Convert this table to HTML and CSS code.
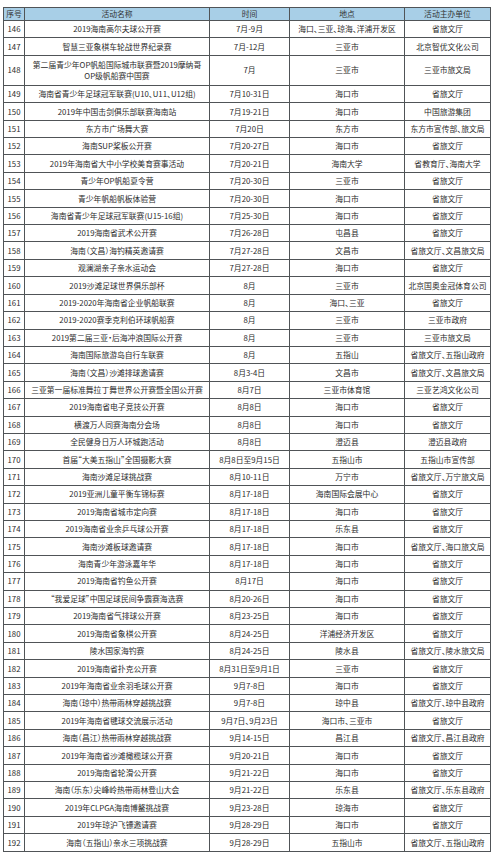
FILE: index.html
```html
<!DOCTYPE html>
<html lang="zh-CN">
<head>
<meta charset="utf-8">
<title>活动表</title>
<link rel="stylesheet" href="styles.css">
</head>
<body>
<div class="sheet">
  <div class="row head"><div class="c">序号</div><div class="c">活动名称</div><div class="c">时间</div><div class="c">地点</div><div class="c">活动主办单位</div></div>
  <div class="row"><div class="c">146</div><div class="c">2019海南高尔夫球公开赛</div><div class="c">7月-9月</div><div class="c">海口、三亚、琼海、洋浦开发区</div><div class="c">省旅文厅</div></div>
  <div class="row"><div class="c">147</div><div class="c">智慧三亚象棋车轮战世界纪录赛</div><div class="c">7月-12月</div><div class="c">三亚市</div><div class="c">北京智优文化公司</div></div>
  <div class="row"><div class="c">148</div><div class="c two">第二届青少年OP帆船国际城市联赛暨2019摩纳哥<br>OP级帆船赛中国赛</div><div class="c">7月</div><div class="c">三亚市</div><div class="c">三亚市旅文局</div></div>
  <div class="row"><div class="c">149</div><div class="c">海南省青少年足球冠军联赛(U10、U11、U12组)</div><div class="c">7月10-31日</div><div class="c">海口市</div><div class="c">省旅文厅</div></div>
  <div class="row"><div class="c">150</div><div class="c">2019年中国击剑俱乐部联赛海南站</div><div class="c">7月19-21日</div><div class="c">海口市</div><div class="c">中国旅游集团</div></div>
  <div class="row"><div class="c">151</div><div class="c">东方市广场舞大赛</div><div class="c">7月20日</div><div class="c">东方市</div><div class="c">东方市宣传部、旅文局</div></div>
  <div class="row"><div class="c">152</div><div class="c">海南SUP桨板公开赛</div><div class="c">7月20-27日</div><div class="c">海口市</div><div class="c">省旅文厅</div></div>
  <div class="row"><div class="c">153</div><div class="c">2019年海南省大中小学校美育赛事活动</div><div class="c">7月20-21日</div><div class="c">海南大学</div><div class="c">省教育厅、海南大学</div></div>
  <div class="row"><div class="c">154</div><div class="c">青少年OP帆船夏令营</div><div class="c">7月20-30日</div><div class="c">三亚市</div><div class="c">省旅文厅</div></div>
  <div class="row"><div class="c">155</div><div class="c">青少年帆船帆板体验营</div><div class="c">7月20-30日</div><div class="c">海口市</div><div class="c">省旅文厅</div></div>
  <div class="row"><div class="c">156</div><div class="c">海南省青少年足球冠军联赛(U15-16组)</div><div class="c">7月25-30日</div><div class="c">海口市</div><div class="c">省旅文厅</div></div>
  <div class="row"><div class="c">157</div><div class="c">2019海南省武术公开赛</div><div class="c">7月26-28日</div><div class="c">屯昌县</div><div class="c">省旅文厅</div></div>
  <div class="row"><div class="c">158</div><div class="c">海南（文昌）海钓精英邀请赛</div><div class="c">7月27-28日</div><div class="c">文昌市</div><div class="c">省旅文厅、文昌旅文局</div></div>
  <div class="row"><div class="c">159</div><div class="c">观澜湖亲子亲水运动会</div><div class="c">7月27-28日</div><div class="c">海口市</div><div class="c">省旅文厅</div></div>
  <div class="row"><div class="c">160</div><div class="c">2019沙滩足球世界俱乐部杯</div><div class="c">8月</div><div class="c">三亚市</div><div class="c">北京国奥金冠体育公司</div></div>
  <div class="row"><div class="c">161</div><div class="c">2019-2020年海南省企业帆船联赛</div><div class="c">8月</div><div class="c">海口、三亚</div><div class="c">省旅文厅</div></div>
  <div class="row"><div class="c">162</div><div class="c">2019-2020赛季克利伯环球帆船赛</div><div class="c">8月</div><div class="c">三亚市</div><div class="c">三亚市政府</div></div>
  <div class="row"><div class="c">163</div><div class="c">2019第二届三亚·后海冲浪国际公开赛</div><div class="c">8月</div><div class="c">三亚市</div><div class="c">三亚市旅文局</div></div>
  <div class="row"><div class="c">164</div><div class="c">海南国际旅游岛自行车联赛</div><div class="c">8月</div><div class="c">五指山</div><div class="c">省旅文厅、五指山政府</div></div>
  <div class="row"><div class="c">165</div><div class="c">海南（文昌）沙滩排球邀请赛</div><div class="c">8月3-4日</div><div class="c">文昌市</div><div class="c">省旅文厅、文昌旅文局</div></div>
  <div class="row"><div class="c">166</div><div class="c">三亚第一届标准舞拉丁舞世界公开赛暨全国公开赛</div><div class="c">8月7日</div><div class="c">三亚市体育馆</div><div class="c">三亚艺鸿文化公司</div></div>
  <div class="row"><div class="c">167</div><div class="c">2019海南省电子竞技公开赛</div><div class="c">8月8日</div><div class="c">海口市</div><div class="c">省旅文厅</div></div>
  <div class="row"><div class="c">168</div><div class="c">横渡万人同赛海南分会场</div><div class="c">8月8日</div><div class="c">海口市</div><div class="c">省旅文厅</div></div>
  <div class="row"><div class="c">169</div><div class="c">全民健身日万人环城跑活动</div><div class="c">8月8日</div><div class="c">澄迈县</div><div class="c">澄迈县政府</div></div>
  <div class="row"><div class="c">170</div><div class="c">首届“大美五指山”全国摄影大赛</div><div class="c">8月8日至9月15日</div><div class="c">五指山市</div><div class="c">五指山市宣传部</div></div>
  <div class="row"><div class="c">171</div><div class="c">海南沙滩足球挑战赛</div><div class="c">8月10-11日</div><div class="c">万宁市</div><div class="c">省旅文厅、万宁旅文局</div></div>
  <div class="row"><div class="c">172</div><div class="c">2019亚洲儿童平衡车锦标赛</div><div class="c">8月17-18日</div><div class="c">海南国际会展中心</div><div class="c">省旅文厅</div></div>
  <div class="row"><div class="c">173</div><div class="c">2019海南省城市定向赛</div><div class="c">8月17-18日</div><div class="c">海口市</div><div class="c">省旅文厅</div></div>
  <div class="row"><div class="c">174</div><div class="c">2019海南省业余乒乓球公开赛</div><div class="c">8月17-18日</div><div class="c">乐东县</div><div class="c">省旅文厅</div></div>
  <div class="row"><div class="c">175</div><div class="c">海南沙滩板球邀请赛</div><div class="c">8月17-18日</div><div class="c">海口市</div><div class="c">省旅文厅、海口旅文局</div></div>
  <div class="row"><div class="c">176</div><div class="c">海南青少年游泳嘉年华</div><div class="c">8月17-18日</div><div class="c">海口市</div><div class="c">省旅文厅</div></div>
  <div class="row"><div class="c">177</div><div class="c">2019海南省钓鱼公开赛</div><div class="c">8月17日</div><div class="c">海口市</div><div class="c">省旅文厅</div></div>
  <div class="row"><div class="c">178</div><div class="c">“我爱足球”中国足球民间争霸赛海选赛</div><div class="c">8月20-26日</div><div class="c">海口市</div><div class="c">省旅文厅</div></div>
  <div class="row"><div class="c">179</div><div class="c">2019海南省气排球公开赛</div><div class="c">8月23-25日</div><div class="c">海口市</div><div class="c">省旅文厅</div></div>
  <div class="row"><div class="c">180</div><div class="c">2019海南省象棋公开赛</div><div class="c">8月24-25日</div><div class="c">洋浦经济开发区</div><div class="c">省旅文厅</div></div>
  <div class="row"><div class="c">181</div><div class="c">陵水国家海钓赛</div><div class="c">8月24-25日</div><div class="c">陵水县</div><div class="c">省旅文厅、陵水旅文局</div></div>
  <div class="row"><div class="c">182</div><div class="c">2019海南省扑克公开赛</div><div class="c">8月31日至9月1日</div><div class="c">三亚市</div><div class="c">省旅文厅</div></div>
  <div class="row"><div class="c">183</div><div class="c">2019年海南省业余羽毛球公开赛</div><div class="c">9月7-8日</div><div class="c">海口市</div><div class="c">省旅文厅</div></div>
  <div class="row"><div class="c">184</div><div class="c">海南（琼中）热带雨林穿越挑战赛</div><div class="c">9月7-8日</div><div class="c">琼中县</div><div class="c">省旅文厅、琼中县政府</div></div>
  <div class="row"><div class="c">185</div><div class="c">2019年海南省毽球交流展示活动</div><div class="c">9月7日、9月23日</div><div class="c">海口市、三亚市</div><div class="c">省旅文厅</div></div>
  <div class="row"><div class="c">186</div><div class="c">海南（昌江）热带雨林穿越挑战赛</div><div class="c">9月14-15日</div><div class="c">昌江县</div><div class="c">省旅文厅、昌江县政府</div></div>
  <div class="row"><div class="c">187</div><div class="c">2019年海南省沙滩橄榄球公开赛</div><div class="c">9月20-21日</div><div class="c">海口市</div><div class="c">省旅文厅</div></div>
  <div class="row"><div class="c">188</div><div class="c">2019海南省轮滑公开赛</div><div class="c">9月21-22日</div><div class="c">海口市</div><div class="c">省旅文厅</div></div>
  <div class="row"><div class="c">189</div><div class="c">海南（乐东）尖峰岭热带雨林登山大会</div><div class="c">9月21-22日</div><div class="c">乐东县</div><div class="c">省旅文厅、乐东县政府</div></div>
  <div class="row"><div class="c">190</div><div class="c">2019年CLPGA海南博鳌挑战赛</div><div class="c">9月23-28日</div><div class="c">琼海市</div><div class="c">省旅文厅</div></div>
  <div class="row"><div class="c">191</div><div class="c">2019年琼沪飞镖邀请赛</div><div class="c">9月28-29日</div><div class="c">海口市</div><div class="c">省旅文厅</div></div>
  <div class="row"><div class="c">192</div><div class="c">海南（五指山）亲水三项挑战赛</div><div class="c">9月28-29日</div><div class="c">五指山市</div><div class="c">省旅文厅、五指山政府</div></div>
</div>
</body>
</html>
```
FILE: styles.css
```css
html, body {
  margin: 0;
  padding: 0;
  background: #ffffff;
}

body {
  padding: 7px 0 0 3px;
  font-family: "Noto Sans CJK SC", "Noto Sans", sans-serif;
  font-size: 7.8px;
  color: #2b2b2b;
  font-feature-settings: "halt";
}

.sheet {
  display: grid;
  width: 488px;
  box-sizing: border-box;
  grid-template-columns: 20px 184px 79px 114px 85px;
  grid-template-rows: 12px 16.41px 16.41px 29px repeat(44, 16.41px);
  gap: 1px;
  padding: 1px;
  background: #505457;
}

.row {
  display: contents;
}

.c {
  background: #ffffff;
  display: flex;
  align-items: center;
  justify-content: center;
  text-align: center;
  white-space: nowrap;
  line-height: 1;
  overflow: hidden;
}

.head .c {
  background: #a8cfe7;
  color: #333;
}

.two {
  line-height: 11px;
}
```
